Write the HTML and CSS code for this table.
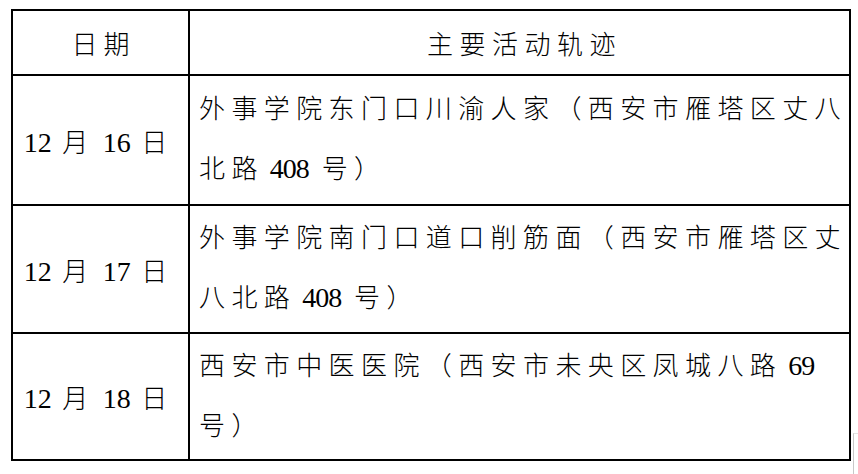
FILE: index.html
```html
<!DOCTYPE html>
<html lang="zh-CN">
<head>
<meta charset="utf-8">
<title>主要活动轨迹</title>
<link rel="stylesheet" href="styles.css">
</head>
<body>
<table class="trace">
  <tr class="head">
    <td class="date">日期</td>
    <td class="title">主要活动轨迹</td>
  </tr>
  <tr class="r1">
    <td class="date"><span class="num">12</span> 月 <span class="num">16</span> 日</td>
    <td class="place">外事学院东门口川渝人家（西安市雁塔区丈八<br>北路<span class="num"> 408</span> 号）</td>
  </tr>
  <tr class="r2">
    <td class="date"><span class="num">12</span> 月 <span class="num">17</span> 日</td>
    <td class="place">外事学院南门口道口削筋面（西安市雁塔区丈<br>八北路<span class="num"> 408</span> 号）</td>
  </tr>
  <tr class="r3">
    <td class="date"><span class="num">12</span> 月 <span class="num">18</span> 日</td>
    <td class="place">西安市中医医院（西安市未央区凤城八路<span class="num"> 69</span><br>号）</td>
  </tr>
</table>
<div class="edge"></div>
</body>
</html>
```
FILE: styles.css
```css
html, body {
  margin: 0;
  padding: 0;
  background: #ffffff;
}
body {
  position: relative;
  width: 858px;
  height: 474px;
  overflow: hidden;
  font-family: "Liberation Serif", "Noto Sans CJK SC", serif;
  font-size: 26px;
  font-weight: 300;
  color: #000000;
}
.trace {
  margin: 9px 0 0 11px;
  border-collapse: separate;
  border-spacing: 0;
  border-top: 2px solid #000;
  border-left: 2px solid #000;
  table-layout: fixed;
}
.trace td {
  box-sizing: border-box;
  border-right: 2px solid #000;
  border-bottom: 2px solid #000;
  padding: 0;
  vertical-align: middle;
  white-space: nowrap;
}
.trace td.date {
  width: 177px;
  text-align: center;
  letter-spacing: 4px;
  padding-right: 6px;
}
.trace td.title,
.trace td.place {
  width: 661px;
}
.head td { height: 65px; }
.r1 td { height: 130px; }
.r2 td { height: 128px; }
.r3 td { height: 127px; }

.head td.date {
  letter-spacing: 6px;
  padding-left: 6px;
  padding-right: 0;
}
.title {
  text-align: center;
  letter-spacing: 6.5px;
  padding-left: 10px !important;
}
.place {
  padding-left: 9px !important;
  letter-spacing: 6.4px;
  line-height: 60px;
}
.num {
  font-family: "Liberation Serif", serif;
  font-size: 28px;
  font-weight: 400;
  letter-spacing: 0;
  line-height: 1;
}
.place .num {
  letter-spacing: -1px;
}
.edge {
  position: absolute;
  left: 853px;
  top: 433px;
  width: 10px;
  height: 50px;
  border-left: 1px solid #c8c8c8;
  border-top: 1px solid #e4e4e4;
}
```
